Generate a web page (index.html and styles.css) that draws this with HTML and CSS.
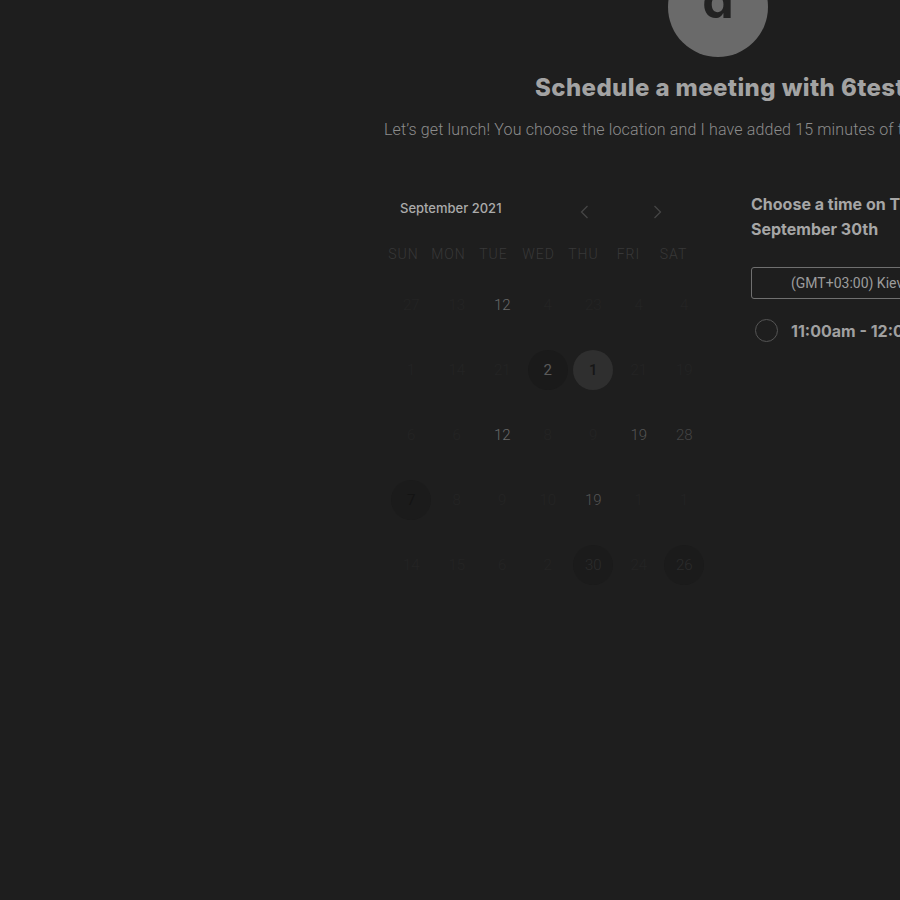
FILE: index.html
```html
<!DOCTYPE html>
<html>
<head>
<meta charset="utf-8">
<link rel="stylesheet" href="styles.css">
</head>
<body>
<div class="page">
  <header class="hero">
    <div class="avatar"><span>d</span></div>
    <h1 class="title">Schedule a meeting with 6testuser</h1>
    <p class="subtitle">Let’s get lunch! You choose the location and I have added 15 minutes of travel time.</p>
  </header>
  <main class="main">
    <section class="cal">
      <div class="cal-head">
        <span class="month">September 2021</span>
        <div class="nav">
          <button class="nav-btn" aria-label="Previous month"><svg width="9" height="14" viewBox="0 0 9 14"><path d="M7.5 1 L1.5 7 L7.5 13" fill="none" stroke="#454545" stroke-width="1.3"/></svg></button>
          <button class="nav-btn" aria-label="Next month"><svg width="9" height="14" viewBox="0 0 9 14"><path d="M1.5 1 L7.5 7 L1.5 13" fill="none" stroke="#454545" stroke-width="1.3"/></svg></button>
        </div>
      </div>
      <div class="weekdays">
        <span>SUN</span><span>MON</span><span>TUE</span><span>WED</span><span>THU</span><span>FRI</span><span>SAT</span>
      </div>
      <div class="dates">
        <span class="d">27</span><span class="d">13</span><span class="d mid">12</span><span class="d">4</span><span class="d">23</span><span class="d">4</span><span class="d">4</span>
        <span class="d">1</span><span class="d">14</span><span class="d">21</span><span class="d c-dark">2</span><span class="d c-sel">1</span><span class="d">21</span><span class="d">19</span>
        <span class="d">6</span><span class="d">6</span><span class="d mid">12</span><span class="d">8</span><span class="d">9</span><span class="d dim">19</span><span class="d dimmer">28</span>
        <span class="d c-dark2">7</span><span class="d">8</span><span class="d">9</span><span class="d">10</span><span class="d dim">19</span><span class="d">1</span><span class="d">1</span>
        <span class="d">14</span><span class="d">15</span><span class="d">6</span><span class="d">2</span><span class="d c-dark3">30</span><span class="d">24</span><span class="d c-dark3">26</span>
      </div>
    </section>
    <section class="times">
      <h2 class="times-title">Choose a time on Thursday,<br>September 30th</h2>
      <div class="tz">(GMT+03:00) Kiev, Europe</div>
      <label class="slot"><span class="radio"></span><span class="slot-text">11:00am - 12:00pm</span></label>
    </section>
  </main>
</div>
</body>
</html>
```
FILE: styles.css
```css
html, body {
  margin: 0;
  padding: 0;
  background: #1e1e1e;
  overflow: hidden;
  width: 900px;
  height: 900px;
}
.page {
  width: 900px;
  overflow: hidden;
  font-family: Roboto, "Liberation Sans", sans-serif;
}
.hero {
  display: flex;
  flex-direction: column;
  white-space: nowrap;
}
.avatar {
  width: 100px;
  height: 100px;
  border-radius: 50%;
  background: #6a6a6a;
  margin-top: -43px;
  margin-left: 668px;
  display: flex;
  justify-content: center;
  align-items: flex-end;
}
.avatar span {
  font-family: Inter, "Liberation Sans", sans-serif;
  font-weight: 700;
  font-size: 50px;
  line-height: 50px;
  color: #222222;
  margin-bottom: 32px;
}
.title {
  margin: 17px 0 0 535px;
  font-family: Inter, "Liberation Sans", sans-serif;
  font-weight: 800;
  font-size: 24px;
  letter-spacing: 0.4px;
  line-height: 28px;
  color: #a3a3a3;
}
.subtitle {
  margin: 18px 0 0 384px;
  font-size: 16px;
  line-height: 20px;
  font-weight: 300;
  letter-spacing: 0.15px;
  color: #8c8c8c;
}
.main {
  display: flex;
  margin: 48px 0 0 388px;
  gap: 46px;
}
.cal {
  width: 317px;
  flex: none;
}
.cal-head {
  display: flex;
  align-items: center;
  height: 40px;
}
.month {
  font-family: Inter, "Liberation Sans", sans-serif;
  font-size: 13px;
  font-weight: 500;
  color: #ababab;
  padding-left: 12px;
}
.nav {
  display: flex;
  margin-left: 68px;
  gap: 43px;
  padding-top: 8px;
}
.nav-btn {
  width: 30px;
  height: 20px;
  background: none;
  border: none;
  padding: 0;
  display: flex;
  align-items: center;
  justify-content: center;
}
.weekdays {
  display: grid;
  grid-template-columns: repeat(7, 45px);
  margin: 16px 0 0 -7px;
  height: 20px;
  align-items: center;
}
.weekdays span {
  text-align: center;
  font-size: 14px;
  font-weight: 300;
  letter-spacing: 1px;
  color: #383838;
}
.dates {
  display: grid;
  grid-template-columns: repeat(7, 45.5px);
  grid-auto-rows: 65px;
  margin: 8px 0 0 0.5px;
}
.d {
  justify-self: center;
  align-self: center;
  width: 40px;
  height: 40px;
  border-radius: 50%;
  display: flex;
  align-items: center;
  justify-content: center;
  font-size: 15px;
  font-weight: 300;
  color: #242424;
}
.d.mid { color: #6a6a6a; }
.d.dim { color: #555555; }
.d.dimmer { color: #444444; }
.d.c-dark { background: #1a1a1a; color: #5a5a5a; font-weight: 400; }
.d.c-sel { background: #2f2f2f; color: #161616; font-weight: 500; }
.d.c-dark2 { background: #1b1b1b; color: #141414; font-weight: 400; }
.d.c-dark3 { background: #1b1b1b; color: #2c2c2c; }
.times {
  padding-top: 4px;
  white-space: nowrap;
  flex: none;
}
.times-title {
  margin: 0;
  font-family: Inter, "Liberation Sans", sans-serif;
  font-size: 16px;
  font-weight: 700;
  line-height: 25px;
  color: #a6a6a6;
}
.tz {
  margin: 25px 0 0 0;
  width: 300px;
  height: 30px;
  border: 1px solid #707070;
  border-radius: 3px;
  padding-left: 39px;
  font-size: 14px;
  line-height: 30px;
  color: #9c9c9c;
}
.slot {
  display: flex;
  align-items: center;
  margin: 20px 0 0 4px;
  gap: 13px;
}
.radio {
  width: 21px;
  height: 21px;
  border: 1.5px solid #555555;
  border-radius: 50%;
}
.slot-text {
  font-family: Inter, "Liberation Sans", sans-serif;
  font-size: 16px;
  font-weight: 700;
  color: #a0a0a0;
}
```
